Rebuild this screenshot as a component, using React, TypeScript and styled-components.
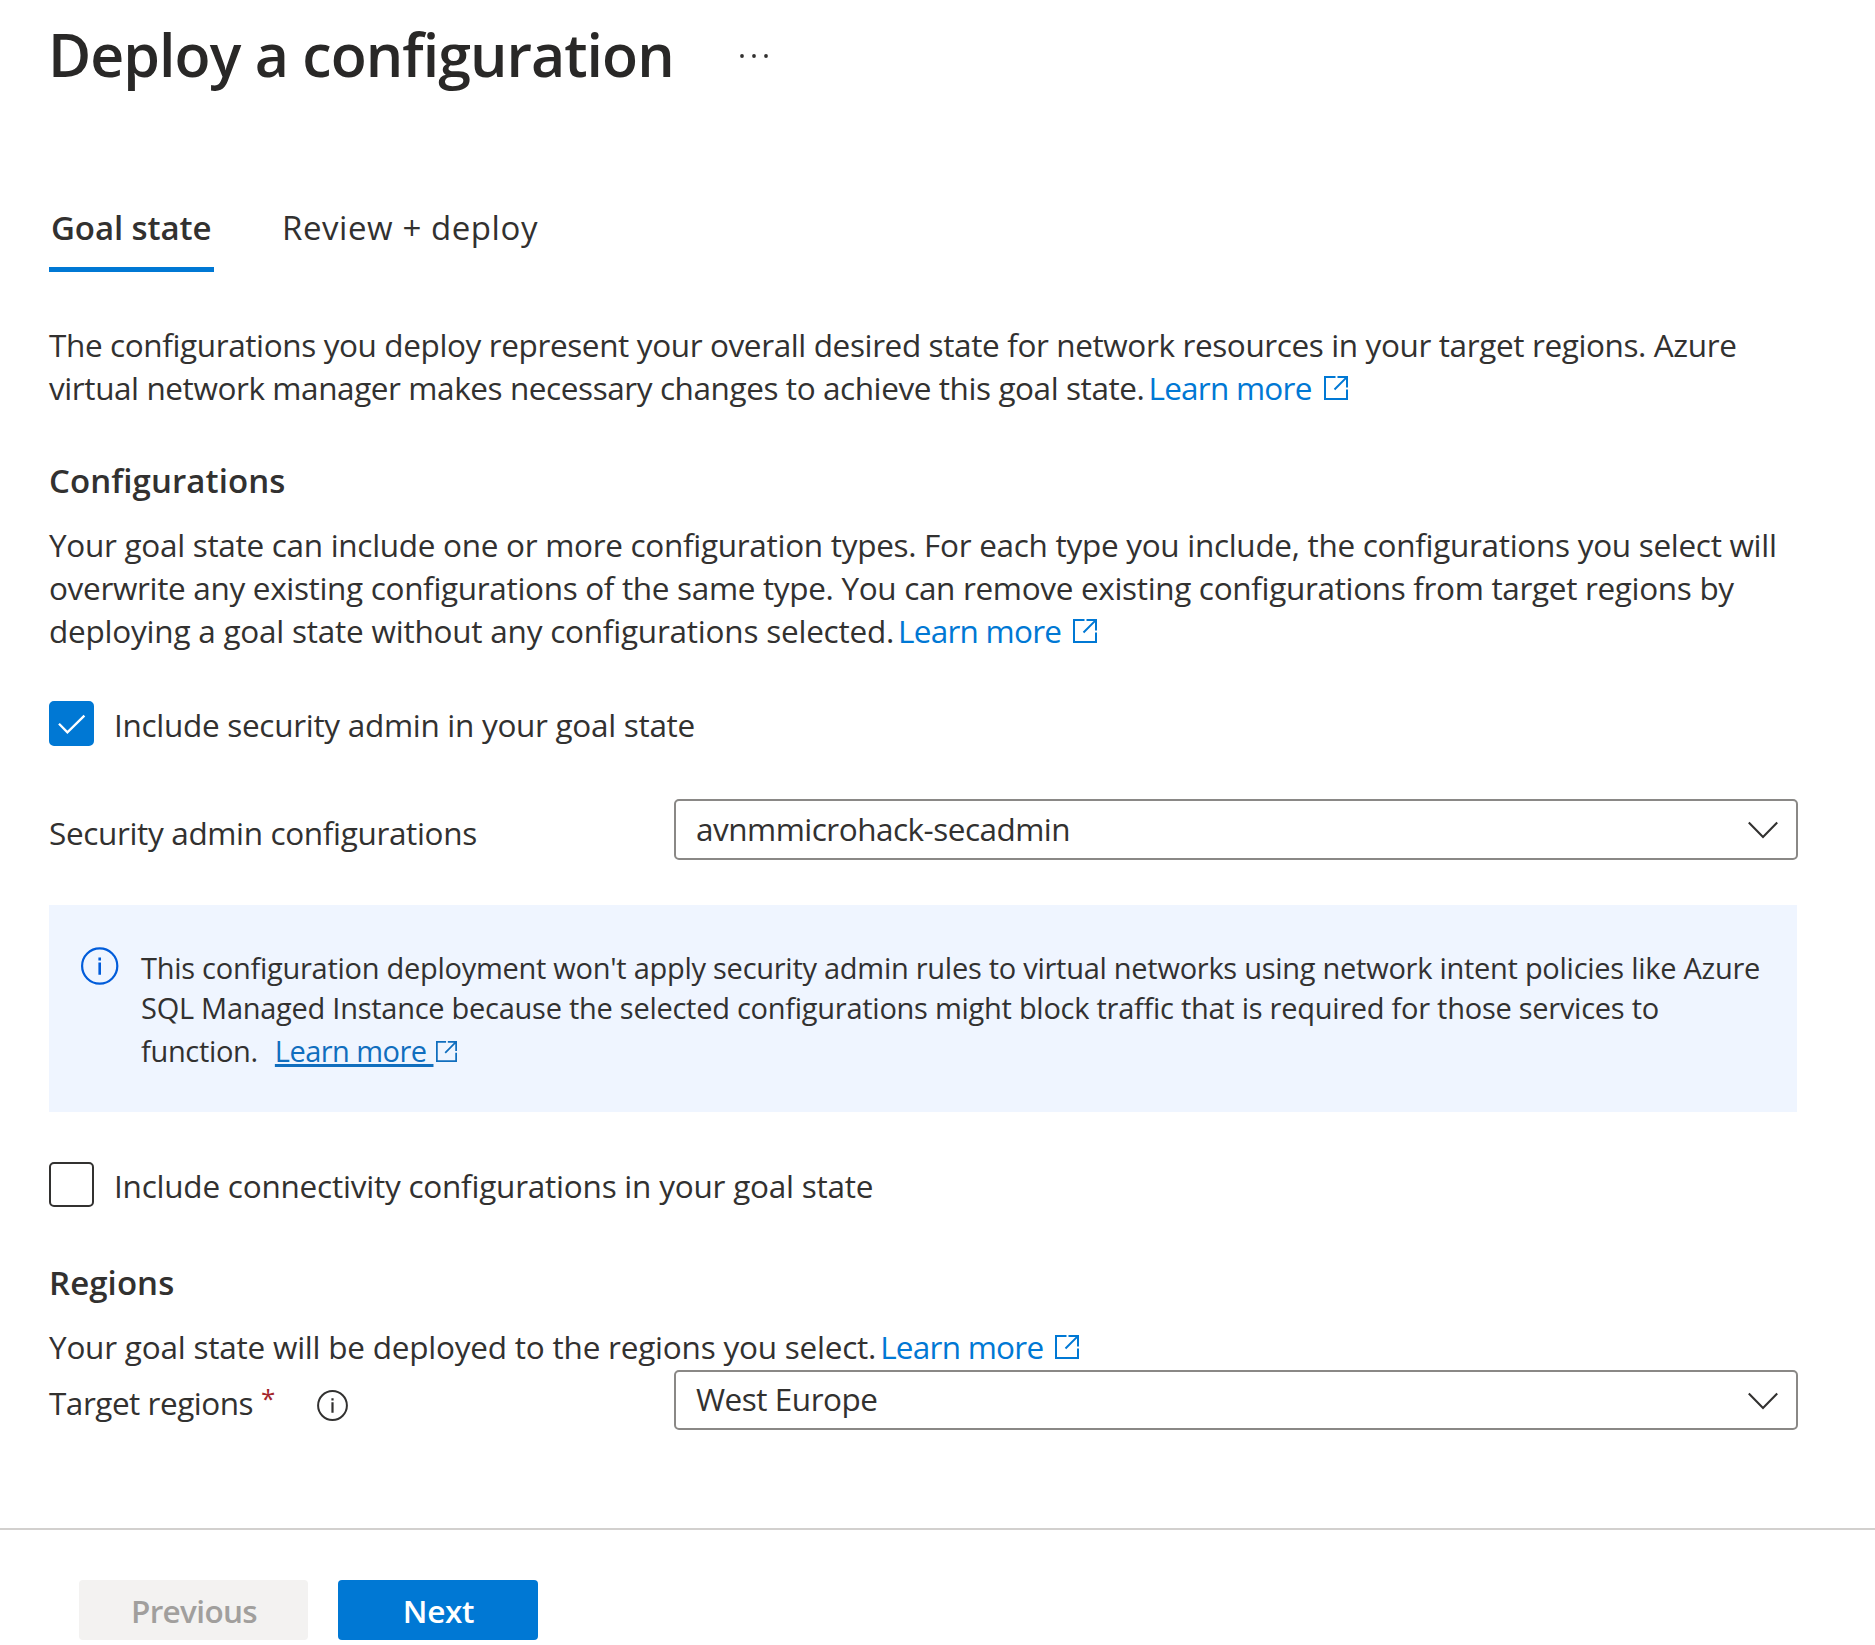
import React from "react";
import styled, { createGlobalStyle, css } from "styled-components";

const GlobalStyle = createGlobalStyle`
  *, *::before, *::after { box-sizing: border-box; }
  body {
    margin: 0;
    background: #fff;
    color: #323130;
    font-family: "Open Sans", "Noto Sans", sans-serif;
    font-size: 31.5px;
    line-height: 43px;
  }
`;

const Page = styled.div`
  display: flex;
  flex-direction: column;
  width: 1875px;
  height: 1645px;
  overflow: hidden;
`;

const Content = styled.main`
  display: flex;
  flex-direction: column;
  width: 1798px;
  height: 1528px;
  flex: none;
  padding: 14px 0 0 49px;
`;

const TitleBar = styled.header`
  display: flex;
  align-items: flex-start;
  height: 80px;
`;

const Title = styled.h1`
  margin: 0 0 0 -1px;
  width: 692px;
  font-size: 59px;
  font-weight: 600;
  line-height: 80px;
  letter-spacing: -0.95px;
  white-space: nowrap;
  color: #292827;
`;

const MoreButton = styled.button`
  margin: 40px 0 0;
  padding: 0;
  border: 0;
  background: none;
  display: flex;
`;

const TabList = styled.nav`
  display: flex;
  gap: 68px;
  margin-top: 112px;
`;

const Tab = styled.a<{ $active?: boolean }>`
  height: 66px;
  font-size: 33px;
  line-height: 44px;
  letter-spacing: 0.57px;
  white-space: nowrap;
  ${({ $active }) =>
    $active &&
    css`
      width: 165px;
      padding-left: 2px;
      border-bottom: 5px solid #0078d4;
      font-weight: 600;
      letter-spacing: -0.08px;
    `}
`;

const Paragraph = styled.p<{ $top: number }>`
  margin: ${({ $top }) => $top}px 0 0;
`;

const Line = styled.span<{ $track: number }>`
  display: block;
  white-space: nowrap;
  letter-spacing: ${({ $track }) => $track}px;
`;

const SectionTitle = styled.h2<{ $top: number }>`
  margin: ${({ $top }) => $top}px 0 -1px;
  font-size: 33px;
  font-weight: 600;
  line-height: 44px;
  letter-spacing: 0.08px;
`;

const Link = styled.a`
  margin-left: 4px;
  color: #0078d4;
  letter-spacing: -0.75px;

  svg {
    margin-left: 12px;
  }
`;

const CheckRow = styled.label<{ $top: number }>`
  display: flex;
  align-items: flex-start;
  gap: 20px;
  height: 45px;
  margin-top: ${({ $top }) => $top}px;
`;

const CheckBox = styled.span<{ $checked?: boolean }>`
  display: flex;
  width: 45px;
  height: 45px;
  border-radius: 5px;
  border: 2px solid ${({ $checked }) => ($checked ? "#0078d4" : "#323130")};
  background: ${({ $checked }) => ($checked ? "#0078d4" : "#fff")};
`;

const CheckLabel = styled(Line)`
  padding-top: 2px;
`;

const FieldRow = styled.div<{ $top: number }>`
  display: grid;
  grid-template-columns: 625px 1124px;
  align-items: start;
  margin-top: ${({ $top }) => $top}px;
`;

const FieldLabel = styled.div<{ $drop: number }>`
  display: flex;
  align-items: flex-start;
  padding-top: ${({ $drop }) => $drop}px;
`;

const Required = styled.span`
  width: 56px;
  margin: -4px 0 0 8px;
  font-size: 26px;
  color: #a4262c;
`;

const InfoSlot = styled.span`
  display: flex;
  margin-top: 9px;
`;

const Select = styled.div<{ $height: number; $lift: number }>`
  display: flex;
  align-items: center;
  justify-content: space-between;
  height: ${({ $height }) => $height}px;
  padding: 0 17px ${({ $lift }) => $lift}px 20px;
  border: 2px solid #8a8886;
  border-radius: 5px;

  svg {
    margin-top: 4px;
  }
`;

const Notice = styled.section`
  display: flex;
  gap: 22px;
  width: 1748px;
  height: 207px;
  margin-top: 45px;
  padding: 42px 0 0 32px;
  background: #eff5ff;
  font-size: 29px;
  line-height: 40px;
`;

const NoticeText = styled.div`
  padding-top: 1px;
`;

const NoticeLine = styled(Line)`
  &:last-child {
    margin-top: 3px;
  }
`;

const NoticeLink = styled.a`
  margin-left: 17px;
  color: #106ebe;
  letter-spacing: -0.55px;

  svg {
    margin-left: 3px;
  }
`;

const Underlined = styled.span`
  white-space: pre;
  text-decoration: underline;
  text-decoration-thickness: 2.5px;
  text-underline-offset: 2px;
  text-decoration-skip-ink: none;
`;

const Footer = styled.footer`
  display: flex;
  align-items: flex-start;
  gap: 30px;
  flex: 1;
  padding: 50px 0 0 79px;
  border-top: 2px solid #d2d0ce;
`;

const Button = styled.button<{ $primary?: boolean }>`
  width: ${({ $primary }) => ($primary ? 200 : 229)}px;
  height: 60px;
  padding: 1px 0 0 1px;
  border: 0;
  border-radius: 4px;
  font: inherit;
  font-weight: 600;
  letter-spacing: ${({ $primary }) => ($primary ? -0.3 : -0.65)}px;
  color: ${({ $primary }) => ($primary ? "#fff" : "#a19f9d")};
  background: ${({ $primary }) => ($primary ? "#0078d4" : "#f3f2f1")};
`;

const External = ({ size = 24 }: { size?: number }) => (
  <svg width={size} height={size} viewBox="0 0 24 24" fill="none" stroke="currentColor" strokeWidth="2">
    <path d="M11.5 1H1v22h22V13.5M13.5 1H23v10.5M10.5 13.5L22.6 1.4" />
  </svg>
);

const Chevron = () => (
  <svg width="32" height="18" viewBox="0 0 32 18" fill="none" stroke="#323130" strokeWidth="2.1">
    <path d="M1.8 1.5L16 16L30.2 1.5" />
  </svg>
);

const More = () => (
  <svg width="28" height="4" viewBox="0 0 28 4" fill="#323130">
    <circle cx="2" cy="2" r="1.9" />
    <circle cx="14" cy="2" r="1.9" />
    <circle cx="26" cy="2" r="1.9" />
  </svg>
);

export default function App() {
  return (
    <Page>
      <GlobalStyle />
      <Content>
        <TitleBar>
          <Title>Deploy a configuration</Title>
          <MoreButton aria-label="More">
            <More />
          </MoreButton>
        </TitleBar>

        <TabList>
          <Tab $active>Goal state</Tab>
          <Tab>Review + deploy</Tab>
        </TabList>

        <Paragraph $top={51}>
          <Line $track={-0.382}>
            The configurations you deploy represent your overall desired state for network resources in your target regions. Azure
          </Line>
          <Line $track={-0.415}>
            virtual network manager makes necessary changes to achieve this goal state.
            <Link>Learn more<External /></Link>
          </Line>
        </Paragraph>

        <SectionTitle $top={50}>Configurations</SectionTitle>
        <Paragraph $top={21}>
          <Line $track={-0.295}>
            Your goal state can include one or more configuration types. For each type you include, the configurations you select will
          </Line>
          <Line $track={-0.328}>
            overwrite any existing configurations of the same type. You can remove existing configurations from target regions by
          </Line>
          <Line $track={-0.225}>
            deploying a goal state without any configurations selected.
            <Link>Learn more<External /></Link>
          </Line>
        </Paragraph>

        <CheckRow $top={49}>
          <CheckBox $checked>
            <svg width="41" height="41" viewBox="0 0 41 41" fill="none" stroke="#fff" strokeWidth="2.3">
              <path d="M8 20.8L16.4 29.4L33.4 12.6" />
            </svg>
          </CheckBox>
          <CheckLabel $track={-0.295}>Include security admin in your goal state</CheckLabel>
        </CheckRow>

        <FieldRow $top={53}>
          <FieldLabel $drop={12}>
            <Line $track={-0.35}>Security admin configurations</Line>
          </FieldLabel>
          <Select $height={61} $lift={3}>
            <Line $track={-0.51}>avnmmicrohack-secadmin</Line>
            <Chevron />
          </Select>
        </FieldRow>

        <Notice>
          <svg width="38" height="38" viewBox="0 0 38 38">
            <circle cx="18.7" cy="19" r="17.6" fill="none" stroke="#015cda" strokeWidth="2.2" />
            <path d="M17.4 10.6h2.6v2.8h-2.6zM17.4 15.6h2.6v12.2h-2.6z" fill="#015cda" />
          </svg>
          <NoticeText>
            <NoticeLine $track={-0.268}>
              This configuration deployment won't apply security admin rules to virtual networks using network intent policies like Azure
            </NoticeLine>
            <NoticeLine $track={-0.265}>
              SQL Managed Instance because the selected configurations might block traffic that is required for those services to
            </NoticeLine>
            <NoticeLine $track={-0.32}>
              function.
              <NoticeLink>
                <Underlined>{"Learn more "}</Underlined>
                <External size={21} />
              </NoticeLink>
            </NoticeLine>
          </NoticeText>
        </Notice>

        <CheckRow $top={50}>
          <CheckBox />
          <CheckLabel $track={-0.225}>Include connectivity configurations in your goal state</CheckLabel>
        </CheckRow>

        <SectionTitle $top={54}>Regions</SectionTitle>
        <Paragraph $top={21}>
          <Line $track={-0.22}>
            Your goal state will be deployed to the regions you select.
            <Link>Learn more<External /></Link>
          </Line>
        </Paragraph>

        <FieldRow $top={2}>
          <FieldLabel $drop={11}>
            <Line $track={-0.48}>Target regions</Line>
            <Required>*</Required>
            <InfoSlot>
              <svg width="31" height="31" viewBox="0 0 31 31">
                <circle cx="15.5" cy="15.5" r="14.4" fill="none" stroke="#323130" strokeWidth="2" />
                <path d="M14.4 8.2h2.2v2.3h-2.2zM14.4 12.2h2.2v10.6h-2.2z" fill="#323130" />
              </svg>
            </InfoSlot>
          </FieldLabel>
          <Select $height={60} $lift={3}>
            <Line $track={-0.48}>West Europe</Line>
            <Chevron />
          </Select>
        </FieldRow>
      </Content>

      <Footer>
        <Button disabled>Previous</Button>
        <Button $primary>Next</Button>
      </Footer>
    </Page>
  );
}
